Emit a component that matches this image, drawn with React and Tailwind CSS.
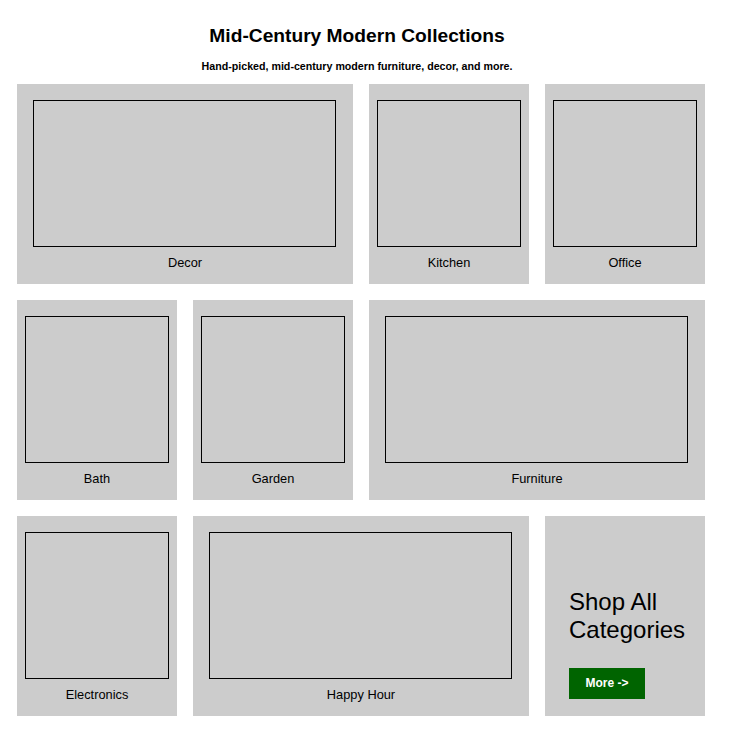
import React from "react";

const tiles = [
  { name: "Decor", wide: true },
  { name: "Kitchen" },
  { name: "Office" },
  { name: "Bath" },
  { name: "Garden" },
  { name: "Furniture", wide: true },
  { name: "Electronics" },
  { name: "Happy Hour", wide: true },
];

function Tile({ name, wide }) {
  return (
    <div className={`${wide ? "col-span-2" : ""} bg-[#cccccc] h-[200px] flex flex-col items-center pt-4`}>
      <div className={`${wide ? "w-[303px] self-start ml-4" : "w-[144px]"} h-[147px] border border-black`} />
      <span className="mt-[6px] text-[12.8px] leading-[20px] text-black">{name}</span>
    </div>
  );
}

export default function App() {
  return (
    <div className="w-[742px] min-h-[741px] bg-white px-[17px] pt-[24px] font-['Liberation_Sans',Arial,sans-serif] text-black">
      <header className="w-[680px] text-center">
        <h1 className="text-[19.2px] leading-[24px] font-bold">Mid-Century Modern Collections</h1>
        <p className="mt-[11px] text-[10.67px] leading-[14px] font-bold">
          Hand-picked, mid-century modern furniture, decor, and more.
        </p>
      </header>

      <div className="mt-[11px] grid grid-cols-4 gap-4 w-[688px]">
        {tiles.map((t) => (
          <Tile key={t.name} {...t} />
        ))}
        <div className="bg-[#cccccc] h-[200px] pl-6 pt-[72px]">
          <h2 className="text-[24px] leading-[27.6px]">Shop All Categories</h2>
          <button className="mt-[25px] bg-[#006400] text-white font-bold text-[12px] leading-[15px] px-[16.5px] py-2">
            More -&gt;
          </button>
        </div>
      </div>
    </div>
  );
}
